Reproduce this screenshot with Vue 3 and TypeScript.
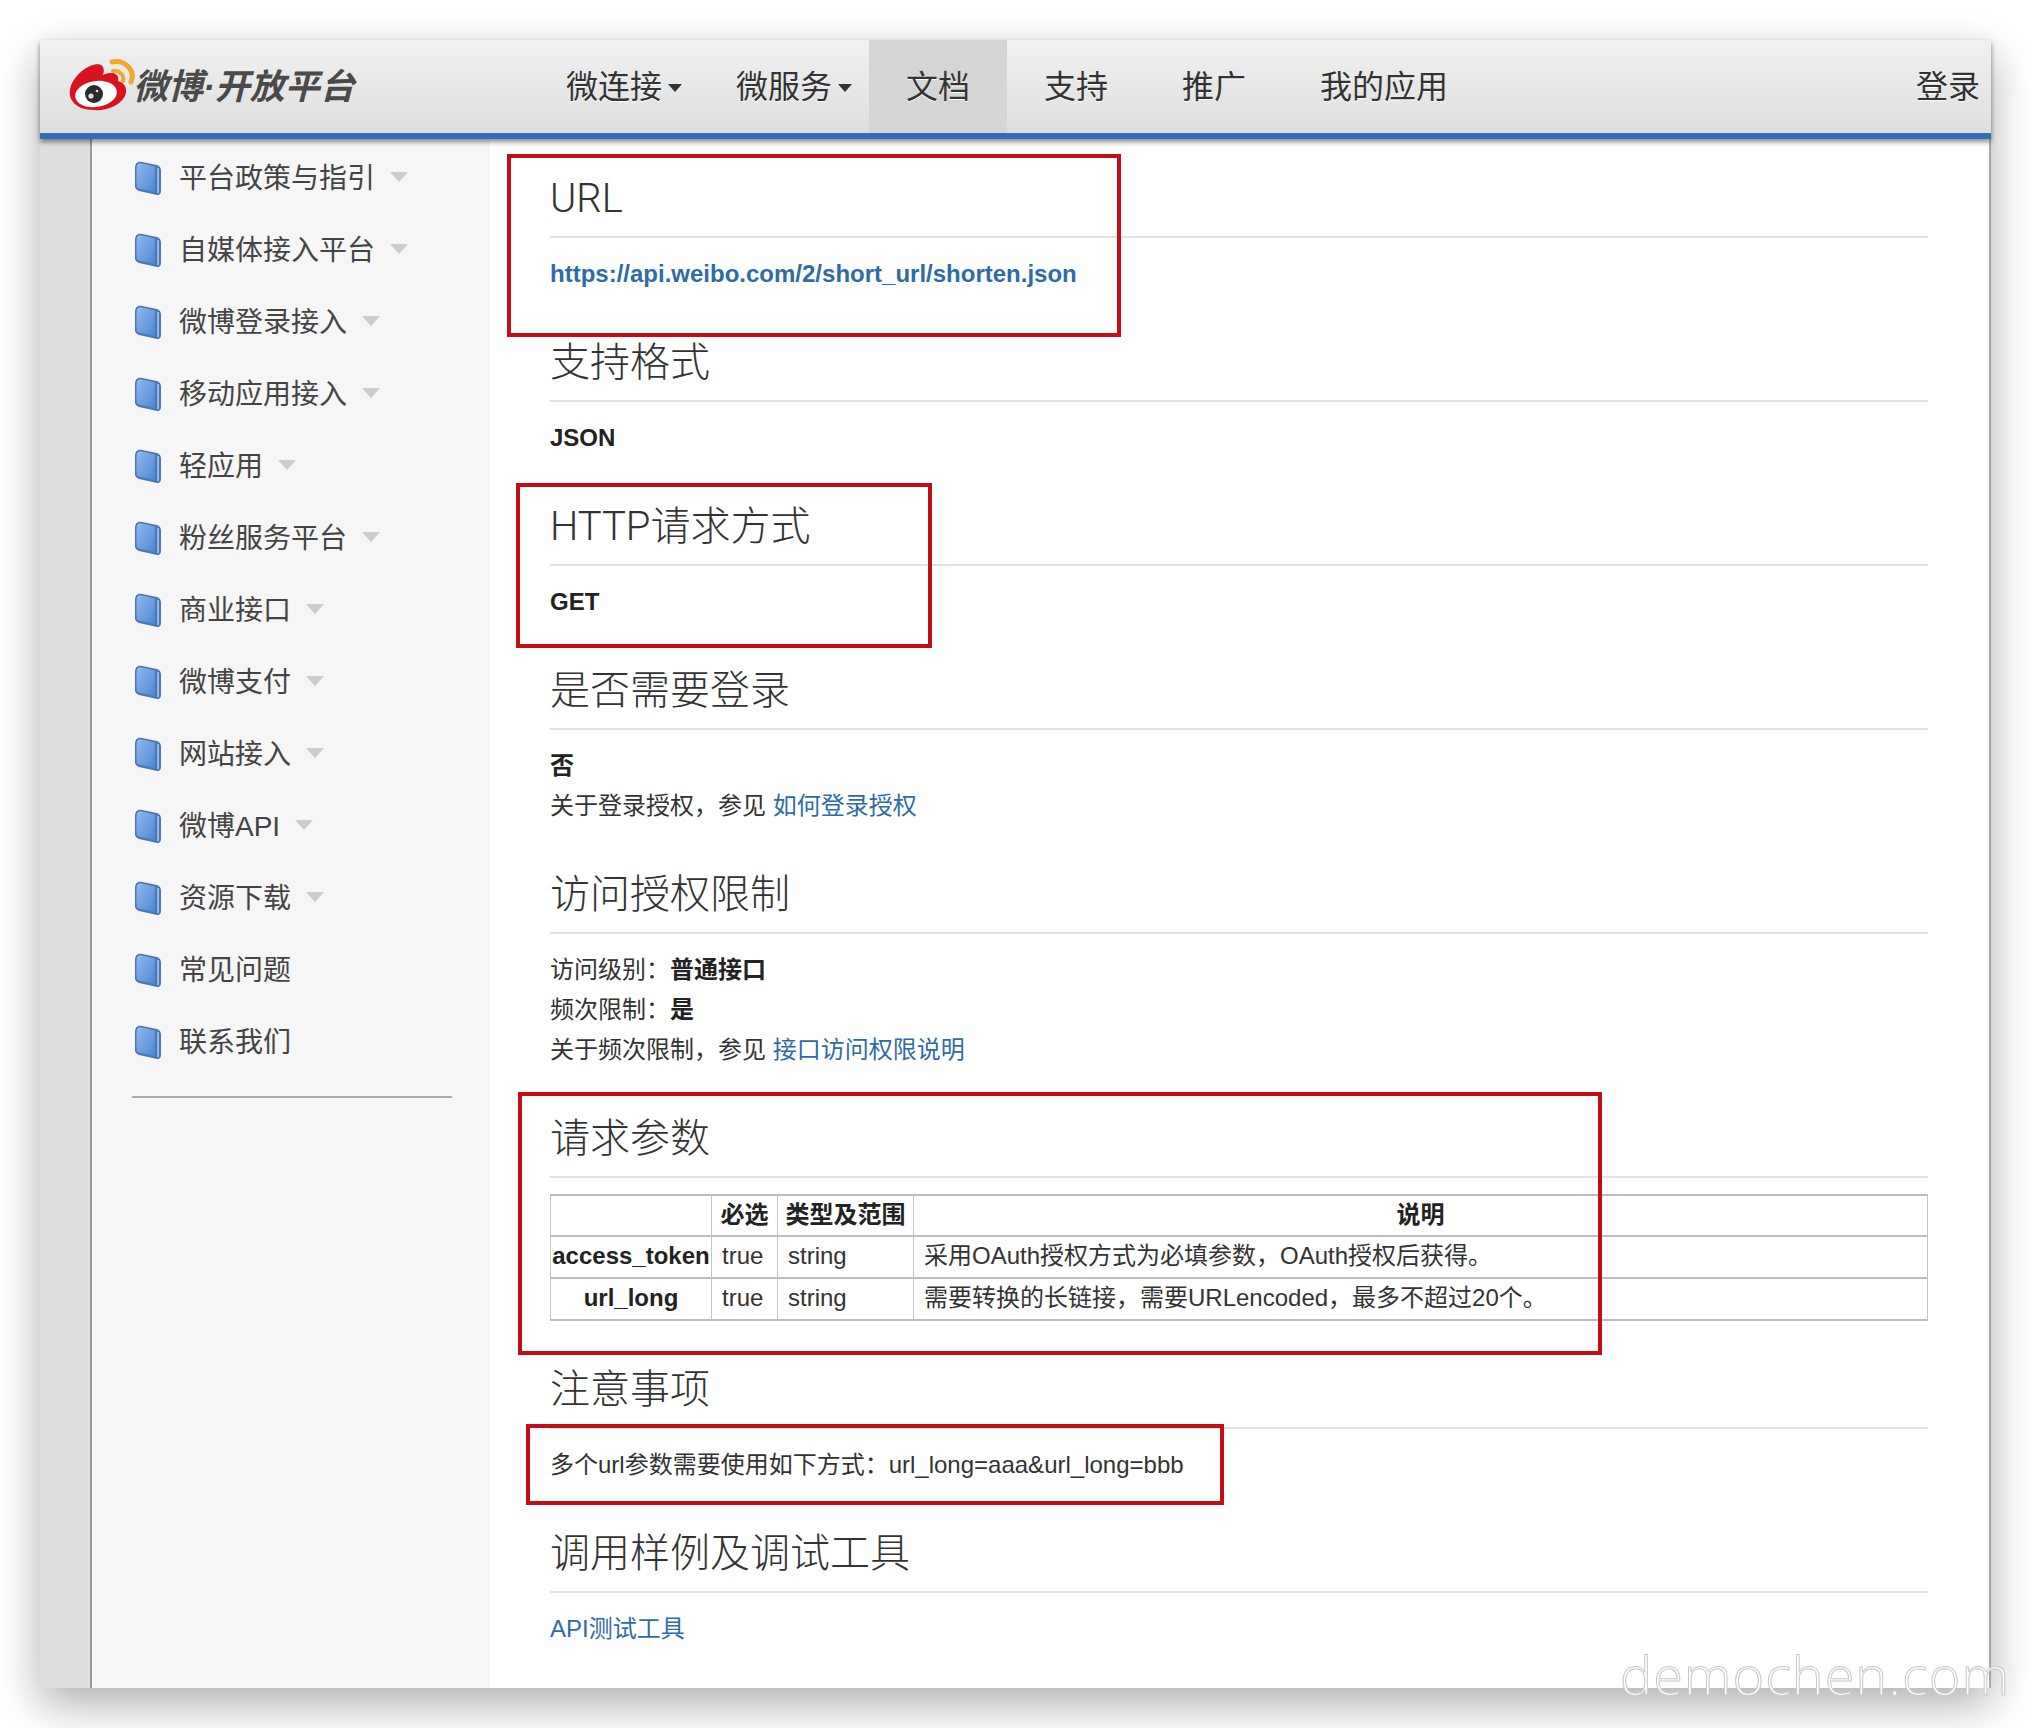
<script setup lang="ts">
interface NavItem { label: string; caret?: boolean; active?: boolean }
interface SideItem { label: string; arrow: boolean }

const nav: NavItem[] = [
  { label: '微连接', caret: true },
  { label: '微服务', caret: true },
  { label: '文档', active: true },
  { label: '支持' },
  { label: '推广' },
  { label: '我的应用' },
]

const side: SideItem[] = [
  { label: '平台政策与指引', arrow: true },
  { label: '自媒体接入平台', arrow: true },
  { label: '微博登录接入', arrow: true },
  { label: '移动应用接入', arrow: true },
  { label: '轻应用', arrow: true },
  { label: '粉丝服务平台', arrow: true },
  { label: '商业接口', arrow: true },
  { label: '微博支付', arrow: true },
  { label: '网站接入', arrow: true },
  { label: '微博API', arrow: true },
  { label: '资源下载', arrow: true },
  { label: '常见问题', arrow: false },
  { label: '联系我们', arrow: false },
]

const rows = [
  { name: 'access_token', req: 'true', type: 'string', desc: '采用OAuth授权方式为必填参数，OAuth授权后获得。' },
  { name: 'url_long', req: 'true', type: 'string', desc: '需要转换的长链接，需要URLencoded，最多不超过20个。' },
]
</script>

<template>
  <div class="page">
    <div class="window">
      <header class="topbar">
        <div class="logo">
          <svg class="logo-mark" viewBox="0 0 66 54" width="66" height="54">
            <path d="M1 39C-1 28 8 15 21 9C31 5 37 8 34 18C42 14 51 16 49 24C56 26 59 32 56 39C51 49 37 54 25 53C11 53 3 47 1 39Z" fill="#d9121f" />
            <ellipse cx="27" cy="37" rx="21" ry="13" fill="#fff" transform="rotate(-8 27 37)" />
            <circle cx="25" cy="37" r="9" fill="#2b2b2b" />
            <circle cx="22" cy="39" r="2.6" fill="#ddd" />
            <circle cx="28" cy="34" r="1.3" fill="#ddd" />
            <path d="M43 5C55 2 67 13 62 25" fill="none" stroke="#f3a72c" stroke-width="5" stroke-linecap="round" />
            <path d="M44 14C50 13 56 18 54 24" fill="none" stroke="#f3a72c" stroke-width="4" stroke-linecap="round" />
          </svg>
          <span class="logo-text">微博·开放平台</span>
        </div>
        <nav class="nav">
          <a v-for="item in nav" :key="item.label" class="nav-item" :class="{ active: item.active, 'has-caret': item.caret }">
            {{ item.label }}<i v-if="item.caret" class="caret"></i>
          </a>
        </nav>
        <a class="login">登录</a>
      </header>

      <div class="body">
        <aside class="sidebar">
          <ul class="menu">
            <li v-for="item in side" :key="item.label" class="menu-item">
              <svg class="book" viewBox="0 0 26 34" width="26" height="34">
                <defs>
                  <linearGradient id="bookfill" x1="0" y1="0" x2="1" y2="1">
                    <stop offset="0" stop-color="#8fb9ee" />
                    <stop offset="1" stop-color="#4f86d4" />
                  </linearGradient>
                </defs>
                <path d="M0 7C0 2 3 0 7 1L22 4C25 5 26 7 26 10V30C26 33 24 34.500 22 34L4 30C1 29 0 27 0 25Z" fill="#4a78b4" />
                <path d="M1.500 7C1.500 3 4 1.500 7 2.500L20 5.500V31L4 27.500C2.500 27 1.500 26 1.500 24Z" fill="url(#bookfill)" />
                <path d="M23 7V32" stroke="#b4cdef" stroke-width="1.500" />
              </svg>
              <span class="menu-label">{{ item.label }}</span>
              <i v-if="item.arrow" class="arrow"></i>
            </li>
          </ul>
          <div class="side-rule"></div>
        </aside>

        <main class="content">
          <section class="sec">
            <h2>URL</h2>
            <p><a class="link strong">https://api.weibo.com/2/short_url/shorten.json</a></p>
          </section>
          <section class="sec">
            <h2>支持格式</h2>
            <p><strong>JSON</strong></p>
          </section>
          <section class="sec">
            <h2>HTTP请求方式</h2>
            <p><strong>GET</strong></p>
          </section>
          <section class="sec">
            <h2>是否需要登录</h2>
            <p><strong>否</strong></p>
            <p>关于登录授权，参见 <a class="link">如何登录授权</a></p>
          </section>
          <section class="sec">
            <h2>访问授权限制</h2>
            <p>访问级别：<strong>普通接口</strong></p>
            <p>频次限制：<strong>是</strong></p>
            <p>关于频次限制，参见 <a class="link">接口访问权限说明</a></p>
          </section>
          <section class="sec">
            <h2>请求参数</h2>
            <table class="params">
              <colgroup>
                <col class="c1" />
                <col class="c2" />
                <col class="c3" />
                <col />
              </colgroup>
              <thead>
                <tr><th></th><th>必选</th><th>类型及范围</th><th>说明</th></tr>
              </thead>
              <tbody>
                <tr v-for="r in rows" :key="r.name">
                  <td class="name">{{ r.name }}</td>
                  <td>{{ r.req }}</td>
                  <td>{{ r.type }}</td>
                  <td>{{ r.desc }}</td>
                </tr>
              </tbody>
            </table>
          </section>
          <section class="sec">
            <h2>注意事项</h2>
            <p>多个url参数需要使用如下方式：url_long=aaa&amp;url_long=bbb</p>
          </section>
          <section class="sec">
            <h2>调用样例及调试工具</h2>
            <p><a class="link">API测试工具</a></p>
          </section>
        </main>
      </div>
    </div>

    <div class="mark m1"></div>
    <div class="mark m2"></div>
    <div class="mark m3"></div>
    <div class="mark m4"></div>
    <div class="watermark">demochen.com</div>
  </div>
</template>

<style>
html, body { margin: 0; background: #fff; }
</style>

<style scoped>
.page {
  position: relative;
  box-sizing: border-box;
  width: 2032px;
  height: 1728px;
  padding: 40px 41px 40px 40px;
  overflow: hidden;
  background: #fff;
  color: #333;
  font-family: "Liberation Sans", "Noto Sans CJK SC", sans-serif;
  font-size: 24px;
}
.window {
  display: flex;
  flex-direction: column;
  height: 100%;
  background: #fff;
  box-shadow: 0 16px 42px rgba(0, 0, 0, 0.32);
}
.topbar {
  position: relative;
  z-index: 2;
  display: flex;
  flex: none;
  height: 93px;
  align-items: stretch;
  background: linear-gradient(#f1f1f1, #dedede);
  border-bottom: 6px solid #2d70b8;
  box-shadow: 0 3px 5px rgba(0, 0, 0, 0.45);
}
.logo {
  display: flex;
  width: 489px;
  flex: none;
  align-items: flex-start;
  padding-left: 29px;
  box-sizing: border-box;
}
.logo-mark { margin-top: 17px; flex: none; }
.logo-text {
  margin: 25px 0 0 -2px;
  font-size: 35px;
  line-height: 44px;
  font-style: italic;
  font-weight: 700;
  color: #4a4a4a;
  white-space: nowrap;
}
.nav { display: flex; }
.nav-item {
  display: flex;
  align-items: center;
  padding: 0 37px 5px;
  font-size: 32px;
  color: #333;
  text-shadow: 0 1px 0 #fff;
  white-space: nowrap;
}
.nav-item.has-caret { padding-right: 17px; }
.nav-item.active { background: #d5d5d5; }
.caret {
  margin: 8px 0 0 6px;
  border-top: 8px solid #333;
  border-left: 7px solid transparent;
  border-right: 7px solid transparent;
}
.login {
  display: flex;
  align-items: center;
  margin-left: auto;
  padding: 0 11px 5px 0;
  font-size: 32px;
  color: #333;
  text-shadow: 0 1px 0 #fff;
}
.body {
  display: flex;
  flex: 1;
  min-height: 0;
  padding-left: 50px;
  background: #dedede;
}
.sidebar {
  box-sizing: border-box;
  width: 400px;
  flex: none;
  border-left: 2px solid #9a9a9a;
  background: #f6f6f6;
  padding-top: 1px;
}
.menu { list-style: none; margin: 0; padding: 0 0 0 43px; }
.menu-item {
  display: flex;
  align-items: center;
  height: 72px;
  font-size: 28px;
  color: #444;
}
.book { flex: none; margin: 4px 18px 0 0; }
.arrow {
  margin: 2px 0 0 15px;
  border-top: 10px solid #ccc;
  border-left: 9px solid transparent;
  border-right: 9px solid transparent;
}
.side-rule {
  width: 320px;
  height: 2px;
  margin: 20px 0 0 40px;
  background: #aaa;
}
.content {
  flex: 1;
  box-sizing: border-box;
  padding: 0 61px 0 60px;
  background: #fff;
  border-right: 2px solid #a8a8a8;
  min-width: 0;
}
.sec { padding-top: 46px; }
.sec:first-child { padding-top: 37px; }
h2 {
  margin: 0 0 16px;
  padding: 1px 0 15px;
  border-bottom: 2px solid #e2e2e2;
  font-family: Roboto, "Noto Sans CJK SC", sans-serif;
  font-size: 40px;
  line-height: 44px;
  font-weight: 300;
  color: #333;
}
p {
  margin: 0;
  line-height: 40px;
  color: #333;
}
strong { font-weight: 700; color: #222; }
.link { color: #2f6ba6; }
.link.strong { font-weight: 700; }
.params {
  width: 100%;
  margin-top: 14px;
  border-collapse: collapse;
  table-layout: fixed;
}
.c1 { width: 161px; }
.c2 { width: 66px; }
.c3 { width: 136px; }
.params th, .params td {
  height: 42px;
  padding: 0 0 2px 10px;
  border-top: 2px solid #bdbdbd;
  border-bottom: 2px solid #bdbdbd;
  border-left: 1px solid #c4c4c4;
  border-right: 1px solid #c4c4c4;
  box-sizing: border-box;
  line-height: 36px;
  white-space: nowrap;
  color: #333;
  text-align: left;
}
.params th { height: 41px; padding: 0 0 2px; text-align: center; font-weight: 700; color: #222; }
.params td.name { padding: 0 0 2px; text-align: center; font-weight: 700; color: #222; }
.mark {
  position: absolute;
  box-sizing: border-box;
  border: 4px solid #c40d1a;
  pointer-events: none;
}
.m1 { left: 507px; top: 154px; width: 614px; height: 183px; }
.m2 { left: 516px; top: 483px; width: 416px; height: 165px; }
.m3 { left: 518px; top: 1092px; width: 1084px; height: 263px; }
.m4 { left: 526px; top: 1424px; width: 698px; height: 81px; }
.watermark {
  position: absolute;
  left: 1620px;
  top: 1636px;
  font-family: "Open Sans", sans-serif;
  font-weight: 300;
  font-size: 54px;
  line-height: 76px;
  letter-spacing: 1px;
  color: #fff;
  -webkit-text-stroke: 1px #c9c9c9;
  white-space: nowrap;
}
</style>
